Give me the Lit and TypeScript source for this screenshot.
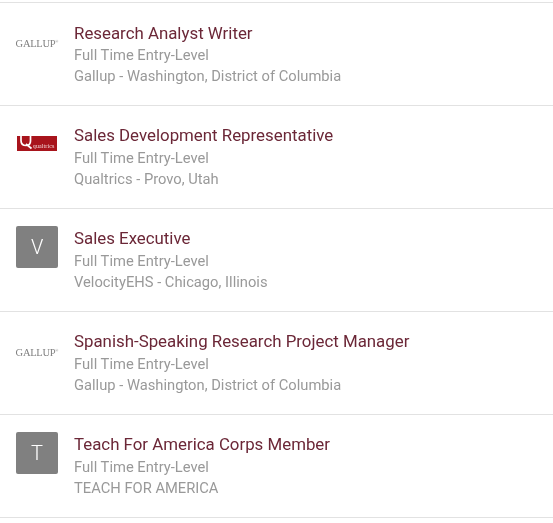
import { LitElement, html, css } from "lit";
import { customElement } from "lit/decorators.js";

type Job = { title: string; sub: string; logo: string };
const jobs: Job[] = [
  { title: "Research Analyst Writer", sub: "Gallup - Washington, District of Columbia", logo: "gallup" },
  { title: "Sales Development Representative", sub: "Qualtrics - Provo, Utah", logo: "qualtrics" },
  { title: "Sales Executive", sub: "VelocityEHS - Chicago, Illinois", logo: "V" },
  { title: "Spanish-Speaking Research Project Manager", sub: "Gallup - Washington, District of Columbia", logo: "gallup" },
  { title: "Teach For America Corps Member", sub: "TEACH FOR AMERICA", logo: "T" },
];

@customElement("app-root")
export class AppRoot extends LitElement {
  static styles = css`
    :host { display: block; font-family: Roboto, "Liberation Sans", sans-serif; background: #fff; padding-top: 2px; }
    .row { height: 103px; box-sizing: border-box; border-top: 1px solid #e2e2e2; display: flex; align-items: flex-start; padding: 17px 0 0 16px; gap: 16.8px; }
    .row:last-child { height: 104px; border-bottom: 1px solid #e2e2e2; }
    .logo { width: 41.6px; height: 41.6px; flex: none; display: flex; align-items: center; justify-content: center; will-change: transform; }
    .letter { background: #808080; border-radius: 2px; }
    .letter span { color: #fff; font-size: 20px; font-weight: 300; will-change: transform; }
    .wordmark { padding-top: 5px; box-sizing: border-box; }
    .gallup { font-family: "Liberation Serif", serif; font-size: 10.5px; color: #808080; letter-spacing: -0.3px; white-space: nowrap; }
    .gallup sup { font-size: 4px; line-height: 0; }
    .q { height: 15px; width: 40px; background: #a8141c; color: #fff; display: flex; align-items: center; font-family: "Liberation Serif", serif; overflow: hidden; }
    .q svg { width: 16px; height: 15px; flex: none; }
    .q span { font-size: 6px; letter-spacing: 0.1px; margin-top: 4px; color: #f4dcdc; }
    .text { display: flex; flex-direction: column; padding-top: 1px; will-change: transform; }
    .title { font-size: 16.85px; line-height: 23.5px; color: #6b2737; }
    .row:first-child .title { margin: 1px 0 -1px; }
    .sub { font-size: 14.72px; line-height: 21px; color: #999; }
  `;

  logo(l: string) {
    if (l === "gallup") return html`<div class="logo wordmark"><span class="gallup">GALLUP<sup>®</sup></span></div>`;
    if (l === "qualtrics")
      return html`<div class="logo"><div class="q">
        <svg viewBox="0 0 16 15" fill="none" stroke="#fff" stroke-width="1.7">
          <path d="M4 0v4.5c0 3 2 5 5 5s4.5-2 4.5-4.5V0" />
          <path d="M9 8l5.5 4.5" />
        </svg>
        <span>qualtrics</span>
      </div></div>`;
    return html`<div class="logo letter"><span>${l}</span></div>`;
  }

  render() {
    return html`${jobs.map(
      (j) => html`<div class="row">
        ${this.logo(j.logo)}
        <div class="text">
          <div class="title">${j.title}</div>
          <div class="sub">Full Time Entry-Level</div>
          <div class="sub">${j.sub}</div>
        </div>
      </div>`
    )}`;
  }
}
